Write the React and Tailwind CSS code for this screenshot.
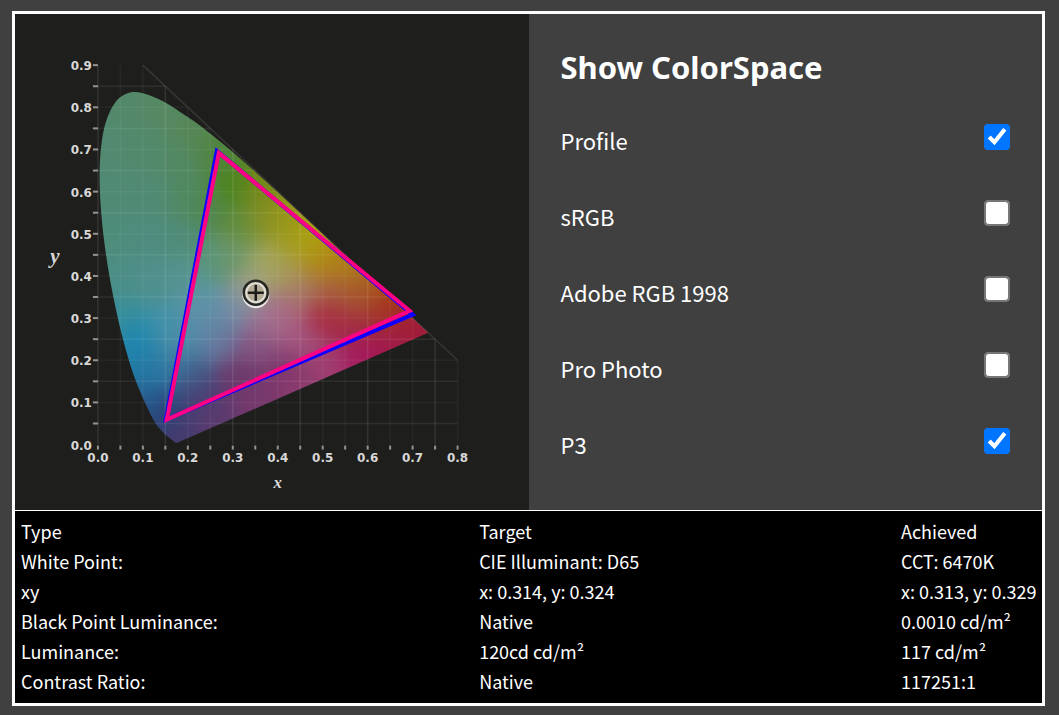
import React, { useState } from 'react';

const X0 = 98;
const Y0 = 445;
const toX = (x) => X0 + x * 450;
const toY = (y) => Y0 - y * 422;

// spectral locus in CIE 1931 xy
const LOCUS = [
  [0.1741, 0.003], [0.1566, 0.0177], [0.144, 0.0297], [0.1241, 0.0578], [0.0913, 0.1327],
  [0.0687, 0.2007], [0.0454, 0.295], [0.0235, 0.4127], [0.0082, 0.5384], [0.0039, 0.6548],
  [0.0139, 0.7502], [0.0389, 0.812], [0.0743, 0.8355], [0.1142, 0.8285], [0.1547, 0.8085],
  [0.1929, 0.7816], [0.2296, 0.7543], [0.3016, 0.6923], [0.3731, 0.6245], [0.4441, 0.5547],
  [0.5125, 0.4866], [0.5752, 0.4242], [0.627, 0.3725], [0.6658, 0.334], [0.7347, 0.2653],
];

// [x, y, r, g, b]
const SEEDS = [
  [130, 105, 84, 136, 106], [165, 110, 86, 136, 98], [195, 130, 86, 134, 86], [110, 145, 82, 137, 112],
  [145, 150, 82, 137, 108], [180, 160, 82, 136, 98], [110, 190, 80, 138, 116], [150, 195, 80, 138, 116],
  [190, 195, 80, 136, 96], [218, 150, 80, 132, 62], [110, 235, 78, 140, 122], [150, 240, 79, 140, 126],
  [185, 240, 80, 140, 120], [120, 280, 76, 142, 134], [155, 280, 80, 144, 142], [190, 275, 86, 148, 144],
  [232, 188, 78, 132, 30], [210, 210, 80, 134, 78], [240, 225, 100, 140, 60], [262, 190, 118, 136, 26],
  [265, 220, 136, 144, 38], [285, 215, 150, 150, 20], [290, 240, 160, 156, 34], [308, 240, 172, 160, 14],
  [320, 262, 176, 138, 20], [345, 265, 174, 126, 24], [370, 285, 168, 96, 32], [392, 300, 166, 54, 22],
  [355, 300, 166, 84, 50], [330, 290, 166, 96, 64], [325, 318, 168, 44, 68], [350, 325, 162, 44, 68],
  [380, 318, 162, 50, 46], [410, 325, 160, 30, 54], [425, 335, 160, 28, 60], [385, 345, 160, 26, 76],
  [360, 352, 164, 26, 92], [325, 360, 160, 62, 112], [300, 340, 162, 84, 126], [285, 315, 168, 104, 130],
  [300, 290, 166, 124, 104], [285, 270, 166, 156, 86], [265, 262, 162, 166, 100], [235, 255, 112, 150, 104],
  [215, 260, 92, 148, 118], [252, 290, 158, 156, 140], [265, 320, 160, 114, 146], [235, 310, 116, 140, 164],
  [200, 300, 92, 148, 166], [220, 340, 104, 118, 156], [205, 325, 92, 140, 168], [255, 345, 134, 84, 128],
  [120, 315, 56, 142, 154], [138, 338, 30, 134, 174], [165, 325, 68, 146, 168], [180, 345, 76, 138, 166],
  [165, 365, 46, 124, 164], [145, 375, 34, 120, 164], [190, 375, 66, 92, 138], [150, 400, 40, 88, 140],
  [165, 415, 40, 66, 118], [178, 435, 72, 58, 110], [200, 400, 72, 62, 114], [215, 415, 92, 58, 110],
  [240, 375, 108, 58, 108], [255, 400, 118, 56, 108], [285, 372, 124, 54, 106], [300, 385, 142, 60, 110],
];

const CELL = 6;
const GRID = [];
for (let y = 74; y < 464; y += CELL) {
  for (let x = 80; x < 450; x += CELL) {
    let total = 0;
    const rgb = [0, 0, 0];
    SEEDS.forEach((s) => {
      const d = (s[0] - x - CELL / 2) ** 2 + (s[1] - y - CELL / 2) ** 2;
      const k = Math.exp(-d / 260) + 1e-9 / (d + 1);
      total += k;
      for (let i = 0; i < 3; i++) rgb[i] += s[i + 2] * k;
    });
    GRID.push({ x, y, fill: `rgb(${rgb.map((c) => Math.round(c / total)).join(',')})` });
  }
}

const smoothPath = (points) => {
  const p = points.map(([x, y]) => [toX(x), toY(y)]);
  let d = `M${p[0]}`;
  for (let i = 0; i < p.length - 1; i++) {
    const a = p[i - 1] || p[i];
    const b = p[i];
    const c = p[i + 1];
    const e = p[i + 2] || c;
    d += `C${b[0] + (c[0] - a[0]) / 6},${b[1] + (c[1] - a[1]) / 6} ${c[0] - (e[0] - b[0]) / 6},${c[1] - (e[1] - b[1]) / 6} ${c}`;
  }
  return d + 'Z';
};

const LOCUS_PATH = smoothPath(LOCUS);
const X_TICKS = Array.from({ length: 17 }, (_, i) => i / 20);
const Y_TICKS = Array.from({ length: 19 }, (_, i) => i / 20);

const ChromaticityChart = ({ showProfile, showP3 }) => (
  <svg viewBox="15 14 514 496" className="block w-full" role="img" aria-label="CIE xy chromaticity diagram">
    <defs>
      <clipPath id="locus">
        <path d={LOCUS_PATH} />
      </clipPath>
      <filter id="soften" x="-5%" y="-5%" width="110%" height="110%" colorInterpolationFilters="sRGB">
        <feGaussianBlur stdDeviation="8" />
      </filter>
    </defs>

    <g clipPath="url(#locus)">
      <g filter="url(#soften)" shapeRendering="crispEdges">
        {GRID.map((c) => (
          <rect key={`${c.x}-${c.y}`} x={c.x} y={c.y} width={CELL} height={CELL} fill={c.fill} />
        ))}
      </g>
    </g>

    {/* grid lines stop at the x + y = 1 diagonal */}
    <g stroke="#fff" strokeWidth="1.5">
      {X_TICKS.map((t, i) => (
        <line key={t} x1={toX(t)} x2={toX(t)} y1={Y0} y2={toY(Math.min(0.9, 1 - t))} opacity={i % 3 ? 0.04 : 0.09} />
      ))}
      {Y_TICKS.slice(1, 18).map((t, i) => (
        <line key={t} x1={X0} x2={toX(Math.min(0.8, 1 - t))} y1={toY(t)} y2={toY(t)} opacity={i % 2 ? 0.04 : 0.07} />
      ))}
      <line x1={toX(0.1)} y1={toY(0.9)} x2={toX(0.8)} y2={toY(0.2)} opacity="0.1" />
    </g>

    <g stroke="#d4d4d4" strokeWidth="2">
      {X_TICKS.map((t) => (
        <line key={t} x1={toX(t)} x2={toX(t)} y1="446" y2="450" opacity="0.65" />
      ))}
      {Y_TICKS.slice(1).map((t) => (
        <line key={t} x1="93" x2="98" y1={toY(t)} y2={toY(t)} opacity="0.65" />
      ))}
    </g>

    <g fill="#d8d8d8" fontFamily="DejaVu Sans, sans-serif" fontWeight="700" fontSize="12">
      {X_TICKS.filter((_, i) => i % 2 === 0).map((t) => (
        <text key={t} x={toX(t)} y="462" textAnchor="middle">{t.toFixed(1)}</text>
      ))}
      {Y_TICKS.filter((_, i) => i % 2 === 0).map((t) => (
        <text key={t} x="92" y={toY(t) + 5} textAnchor="end">{t.toFixed(1)}</text>
      ))}
    </g>
    <g fill="#d8d8d8" fontFamily="Liberation Serif, serif" fontStyle="italic" fontWeight="700" textAnchor="middle">
      <text x="55" y="263" fontSize="21">y</text>
      <text x="278" y="488" fontSize="17">x</text>
    </g>

    {showP3 && <path d="M217 151L413 315L166 420Z" fill="none" stroke="#1000ff" strokeWidth="4" />}
    {showProfile && <path d="M219 153L410 311L167 420Z" fill="none" stroke="#ff0084" strokeWidth="4" />}

    <g fill="none">
      <circle cx="256" cy="295" r="12" stroke="#fff" strokeWidth="3" opacity="0.8" />
      <circle cx="256" cy="293" r="12" fill="#b4ac98" stroke="#262622" strokeWidth="2.5" />
      <circle cx="256" cy="293" r="9.5" stroke="#fff" strokeWidth="2" opacity="0.6" />
      <path d="M248 293H264M256 285V301" stroke="#1c1c18" strokeWidth="2.5" />
    </g>
  </svg>
);

const COLOR_SPACES = [
  { id: 'profile', label: 'Profile' },
  { id: 'srgb', label: 'sRGB' },
  { id: 'adobe', label: 'Adobe RGB 1998' },
  { id: 'prophoto', label: 'Pro Photo' },
  { id: 'p3', label: 'P3' },
];

const RESULTS = [
  ['White Point:', 'CIE Illuminant: D65', 'CCT: 6470K'],
  ['xy', 'x: 0.314, y: 0.324', 'x: 0.313, y: 0.329'],
  ['Black Point Luminance:', 'Native', '0.0010 cd/m²'],
  ['Luminance:', '120cd cd/m²', '117 cd/m²'],
  ['Contrast Ratio:', 'Native', '117251:1'],
];

const App = () => {
  const [shown, setShown] = useState({ profile: true, p3: true });
  const toggle = (id) => setShown((prev) => ({ ...prev, [id]: !prev[id] }));

  return (
    <div className="min-h-screen bg-[#404040] pt-[11px] pb-[9px] pl-3 pr-[14px] font-['Noto_Sans_CJK_SC',sans-serif] text-white">
      <div className="border-[3px] border-white">
        <div className="grid grid-cols-2 border-b border-white">
          <div className="bg-[#1e1e1c]">
            <ChromaticityChart showProfile={shown.profile} showP3={shown.p3} />
          </div>
          <div className="px-8 pt-8">
            <h2 className="font-['Noto_Sans',sans-serif] text-[31px] leading-[42px] font-bold">Show ColorSpace</h2>
            <div className="mt-9 flex flex-col gap-[44px]">
              {COLOR_SPACES.map(({ id, label }) => (
                <div key={id} className="flex h-8 items-start justify-between">
                  <label htmlFor={id} className="text-[22px] leading-8">{label}</label>
                  <input
                    id={id}
                    type="checkbox"
                    checked={!!shown[id]}
                    onChange={() => toggle(id)}
                    className="size-[13px] origin-top-right scale-200"
                  />
                </div>
              ))}
            </div>
          </div>
        </div>

        <table className="w-full bg-black text-left text-lg leading-[30px]">
          <thead>
            <tr>
              <th className="w-[45%] pt-[5px] pl-1.5 font-normal">Type</th>
              <th className="pt-[5px] pl-0.5 font-normal">Target</th>
              <th className="w-[141px] pt-[5px] font-normal">Achieved</th>
            </tr>
          </thead>
          <tbody>
            {RESULTS.map(([type, target, achieved]) => (
              <tr key={type} className="last:*:pb-[7px]">
                <td className="pl-1.5">{type}</td>
                <td className="pl-0.5">{target}</td>
                <td className="whitespace-nowrap">{achieved}</td>
              </tr>
            ))}
          </tbody>
        </table>
      </div>
    </div>
  );
};

export default App;
